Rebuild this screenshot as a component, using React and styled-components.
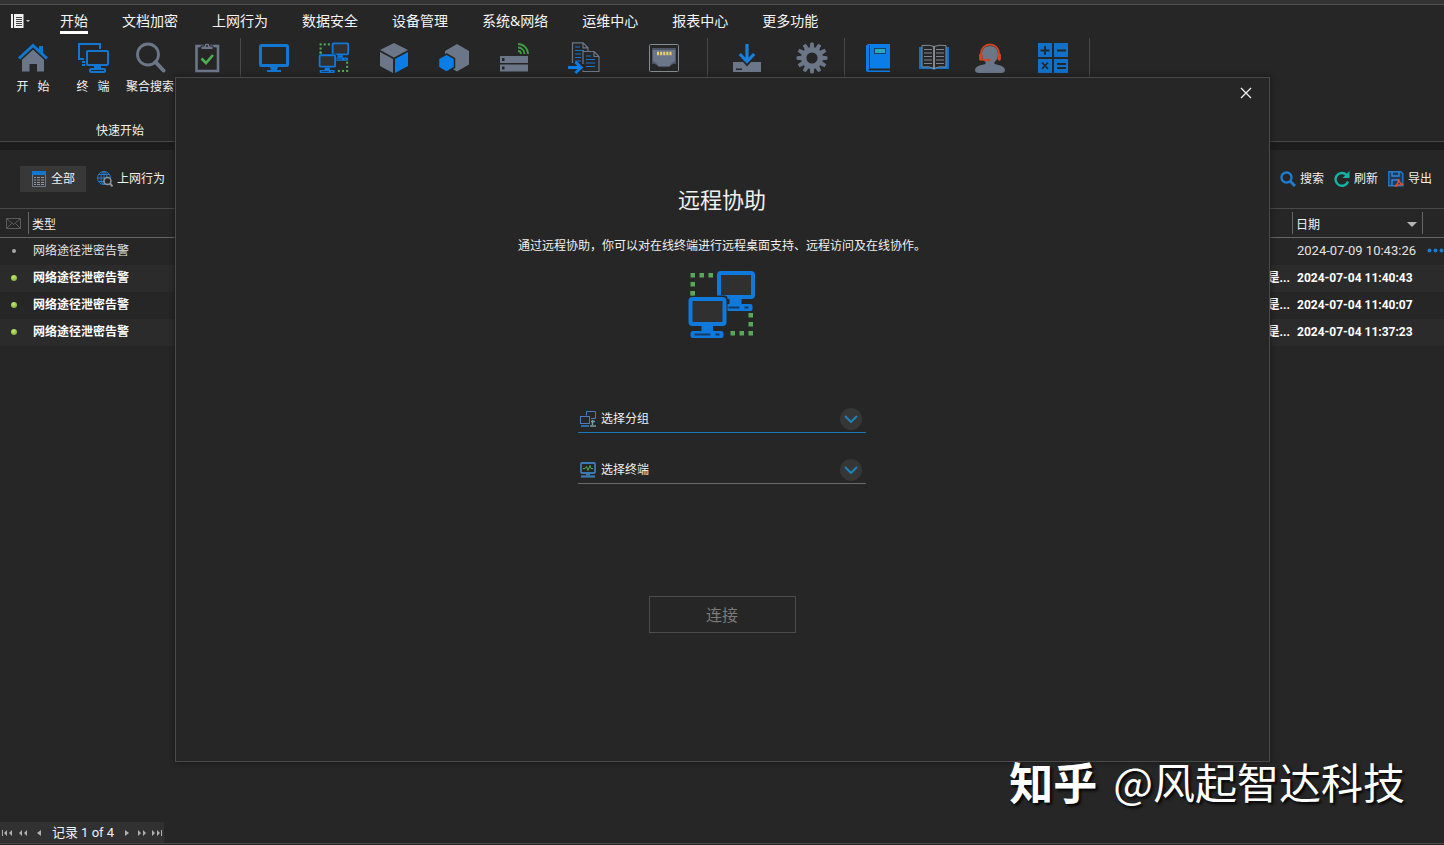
import React from "react";
import styled, { createGlobalStyle } from "styled-components";

const BLUE = "#1177d1";
const GRAY = "#6b7688";
const GREEN = "#4caf50";
const BG = "#262626";

const HomeIcon = () => (
  <Icon viewBox="0 0 32 32">
    <path d="M5 17.5L16 7.5l11 10V29.5h-7V22h-7.500v7.500H5z" fill={GRAY} />
    <path d="M2 17L16 4l14 13" fill="none" stroke={BG} strokeWidth="5" />
    <path d="M22 4h4v8l-4-4z" fill={BLUE} />
    <path d="M2 16.500L16 3.500l14 13" fill="none" stroke={BLUE} strokeWidth="3" />
  </Icon>
);

const TerminalIcon = () => (
  <Icon viewBox="0 0 32 32" fill="none" stroke={BLUE} strokeWidth="2">
    <path d="M7 17H2V2h21v5" />
    <path d="M8 20H5M8 23H5" />
    <rect x="10" y="9" width="21" height="14" rx="1" />
    <path d="M17 25h7" strokeWidth="3" />
    <rect x="13" y="27" width="15" height="3" rx="1" />
  </Icon>
);

const SearchIcon = () => (
  <Icon viewBox="0 0 32 32" fill="none" stroke={GRAY}>
    <circle cx="14" cy="12.500" r="10.500" strokeWidth="2.800" />
    <path d="M21.500 20l8 8.500" strokeWidth="4" strokeLinecap="round" />
  </Icon>
);

const TaskIcon = () => (
  <Icon viewBox="0 0 32 32" fill="none" stroke={GRAY}>
    <rect x="5.500" y="4" width="21.500" height="25" strokeWidth="2.600" />
    <path d="M10 7.500V4h3a3 3 0 0 1 6 0h3v3.500z" fill={GRAY} stroke={BG} />
    <circle cx="16" cy="4" r="1" fill={BG} stroke="none" />
    <path d="M10.500 16.500l4.500 4.500 7-8" stroke={GREEN} strokeWidth="2.600" />
  </Icon>
);

const MonitorIcon = () => (
  <Icon viewBox="0 0 32 32">
    <rect x="2.500" y="3.500" width="27" height="20" rx="1" fill="none" stroke={BLUE} strokeWidth="3" />
    <path d="M12 25h8l-1 3h4v2H9v-2h4z" fill={BLUE} />
  </Icon>
);

const dots = [
  [3, 3], [12, 3], [21, 3], [3, 12], [3, 21],
  [61, 43], [61, 52], [61, 61], [52, 61], [43, 61],
];

const RemoteArt = ({ size }) => (
  <Icon $size={size} viewBox="0 0 69 70">
    {dots.map(([x, y]) => (
      <rect key={`${x}-${y}`} x={x} y={y} width="4.500" height="4.500" fill="#57a85a" />
    ))}
    <rect x="31.500" y="3" width="34" height="24" rx="2" fill="#303030" stroke="#0f79dc" strokeWidth="4" />
    <path d="M42 29h12v5H42z" fill="#0f79dc" />
    <rect x="38" y="34" width="27" height="7" rx="2" fill="#0f79dc" />
    <path d="M41 37.500h11M57 37.500h4" stroke="#143c66" strokeWidth="2" />
    <path d="M0 25.500h37a3 3 0 0 1 3 3v29H0z" fill={BG} />
    <rect x="3" y="29" width="34" height="25" rx="2" fill="#303030" stroke="#0f79dc" strokeWidth="4" />
    <rect x="3" y="21" width="4.500" height="4.500" fill="#57a85a" />
    <path d="M14 56h11.500v6H14z" fill="#0f79dc" />
    <rect x="3" y="61" width="33" height="7" rx="2.500" fill="#0f79dc" />
    <path d="M7 64.500h16M28 64.500h4" stroke="#143c66" strokeWidth="2" />
  </Icon>
);

const CubeIcon = () => (
  <Icon viewBox="0 0 32 32">
    <path d="M16 1l14 7-14 7.500L2 8z" fill={GRAY} />
    <path d="M2 10l13 7v14L2 24z" fill={GRAY} />
    <path d="M17 17l13-7v14l-13 7z" fill="#0a7ee6" />
  </Icon>
);

const HexIcon = () => (
  <Icon viewBox="0 0 32 32">
    <path d="M19 2l12 7v13.500L19 29.500 7 22.500V9z" fill={GRAY} />
    <path d="M8.500 12l8 4.500v9l-8 4.700-8-4.700v-9z" fill="#0a7ee6" stroke={BG} strokeWidth="1.500" />
  </Icon>
);

const ServerIcon = () => (
  <Icon viewBox="0 0 32 32">
    <path d="M2 14h28v7H2zM2 22.500h28v7H2z" fill={GRAY} />
    <path d="M4 16h2.500v3H4zM4 24.500h2.500v3H4z" fill={BG} />
    <g fill="none" stroke="#3f9a43" strokeWidth="1.800">
      <path d="M20 9a3 3 0 0 1 3 3" />
      <path d="M20 5.500a6.500 6.500 0 0 1 6.500 6.500" />
      <path d="M20 2a10 10 0 0 1 10 10" />
    </g>
  </Icon>
);

const DocsIcon = () => (
  <Icon viewBox="0 0 32 32" fill="none" stroke={GRAY} strokeWidth="1.200">
    <path d="M4.500 21V.8h10.500l5 5V9M15 .8v5h5" />
    <path d="M7 5h5M7 8.500h9M7 12h6M7 15.500h6M7 19h6" stroke={BLUE} />
    <path d="M15 22V9.500h11l5 5v15H15v-1M26 9.500v5h5" />
    <path d="M18 14h5M18 17.500h9M18 21h9M18 24.500h9" stroke={BLUE} />
    <path d="M0 25.500h12M7.500 20l5.500 5.500L7.500 31" stroke="#0a7ee6" strokeWidth="3" />
  </Icon>
);

const PortIcon = () => (
  <Icon viewBox="0 0 32 32">
    <rect x="1.500" y="2.500" width="29" height="27" rx="1" fill="none" stroke="#858a93" />
    <path d="M5 6h22q1 0 1 1v14q0 1-1 1h-2l-4 3H11l-4-3H5q-1 0-1-1V7q0-1 1-1z" fill="#4d5767" />
    <path d="M5 8h22v11l-3 2-3 3H11l-3-3-3-2z" fill={GRAY} />
    <path d="M9 11.500h14.500" stroke="#ecd06a" strokeWidth="3.500" strokeDasharray="2.100 1" />
  </Icon>
);

const DownloadIcon = () => (
  <Icon viewBox="0 0 32 32">
    <path d="M2 20h28v10H2z" fill={GRAY} />
    <path d="M5 26.500h6v1.500H5z" fill={BG} />
    <path d="M16 2v18M8.500 11.500L16 20l7.500-8.500" fill="none" stroke={BG} strokeWidth="6" />
    <path d="M16 2v17M8.800 12L16 19.500l7.200-7.500" fill="none" stroke="#1680dd" strokeWidth="3.200" />
  </Icon>
);

const GearIcon = () => (
  <Icon viewBox="0 0 32 32">
    {[0, 30, 60, 90, 120, 150, 180, 210, 240, 270, 300, 330].map((a) => (
      <path key={a} d="M14.200 6l.6-5h2.400l.6 5z" fill={GRAY} stroke={GRAY} transform={`rotate(${a} 16 16)`} />
    ))}
    <circle cx="16" cy="16" r="8.200" fill="none" stroke={GRAY} strokeWidth="5.200" />
  </Icon>
);

const BookIcon = () => (
  <Icon viewBox="0 0 32 32">
    <path d="M4 3.500L6 2h22v24.500H7.500a1 1 0 0 0 0 2H28V30H6q-2 0-2-2z" fill="#0a7ee6" />
    <path d="M7.500 3v23" stroke={BG} strokeWidth="1" />
    <rect x="12.500" y="6.500" width="11" height="5" fill="#2aa7c4" stroke="#17405e" />
  </Icon>
);

const OpenBookIcon = () => (
  <Icon viewBox="0 0 32 32">
    <path d="M1 5h30v22H18l-2 1-2-1H1z" fill="#0f70c4" />
    <path d="M4 3.500q8-1 12 1 4-2 12-1V25q-8-1-12 1.500Q12 24 4 25z" fill={BG} stroke="#858b95" />
    <path d="M16 4.500v22" stroke="#c4c8cf" strokeWidth="1.200" />
    <path
      d="M6 7.500h8M6 11h8M6 14.500h8M6 18h8M6 21.500h8M18 7.500h8M18 11h8M18 14.500h8M18 18h8M18 21.500h8"
      stroke="#7e858f"
    />
  </Icon>
);

const HeadsetIcon = () => (
  <Icon viewBox="0 0 32 32">
    <path d="M16 4c5 0 8 3.500 8 8 0 4-1.500 6.500-3.500 8v2c6 1 10.500 3 10.500 6q0 3-4 3H5q-4 0-4-3c0-3 4.500-5 10.500-6v-2C9.500 18.500 8 16 8 12c0-4.500 3-8 8-8z" fill={GRAY} />
    <path d="M7 13v-1.500a9 9 0 0 1 18 0V13" fill="none" stroke="#d0451f" strokeWidth="1.800" />
    <path d="M6.800 13v4M25.200 13v4" stroke="#d0451f" strokeWidth="3.500" strokeLinecap="round" />
    <path d="M7 17q3 1.500 6 1" fill="none" stroke="#d0451f" strokeWidth="1.500" />
    <ellipse cx="14.500" cy="18" rx="2" ry="1.300" fill="#d0451f" />
  </Icon>
);

const CalcIcon = () => (
  <Icon viewBox="0 0 32 32">
    <path d="M1 1h14v14H1zM17 1h14v14H17zM1 17h14v14H1zM17 17h14v14H17z" fill="#1170c8" />
    <path
      d="M8 4v9M3.500 8.500h9M20 8.500h9M5 20.500l6 6.500M11 20.500L5 27M20 22h9M20 26h9"
      stroke={BG}
      strokeWidth="1.800"
    />
  </Icon>
);

const ListIcon = () => (
  <Icon $size={16} viewBox="0 0 16 16">
    <rect x="1.500" y=".5" width="13" height="15" fill="none" stroke="#6f7a88" />
    <path d="M1 0h14v4H1z" fill={BLUE} />
    <path d="M3 6.500h2M6 6.500h3M10 6.500h3M3 9h2M6 9h3M10 9h3M3 11.500h2M6 11.500h3M10 11.500h3M3 13.500h2M6 13.500h3M10 13.500h3" stroke="#9098a3" />
  </Icon>
);

const GlobeIcon = () => (
  <Icon $size={16} viewBox="0 0 16 16" fill="none" stroke="#2a7cc7">
    <circle cx="7" cy="7" r="6.500" />
    <ellipse cx="7" cy="7" rx="3" ry="6.500" />
    <path d="M.5 7h13M1.500 3.500h11M1.500 10.500h11M7 .5v13" />
    <circle cx="10.500" cy="10" r="3.500" fill={BG} stroke="#8d949e" strokeWidth="1.500" />
    <path d="M13 12.500l2.500 3" stroke="#8d949e" strokeWidth="2" />
  </Icon>
);

const FindIcon = () => (
  <Icon $size={16} viewBox="0 0 16 16" fill="none" stroke="#1c7cd0">
    <circle cx="6.500" cy="6.500" r="5" strokeWidth="2.400" />
    <path d="M10.500 10.500l4.500 4.500" strokeWidth="3" />
  </Icon>
);

const RefreshIcon = () => (
  <Icon $size={16} viewBox="0 0 16 16">
    <path d="M14 10.500A6.400 6.400 0 1 1 12.500 3.800" fill="none" stroke="#14b3a3" strokeWidth="2.400" />
    <path d="M15.500 0v7H8.500z" fill="#14b3a3" />
  </Icon>
);

const ExportIcon = () => (
  <Icon $size={16} viewBox="0 0 16 16">
    <path d="M.8.800h12l2 2v12h-14z" fill="#1d3a5c" stroke="#1c7cd0" strokeWidth="1.400" />
    <path d="M4 1v4h7V1M4 15V9h6" fill="none" stroke="#2b8be0" strokeWidth="1.400" />
    <path d="M7 15.500c3-3 4-5 3.500-7.500 1 4 2.500 5.500 5 5.500-3-.5-5.500.5-8.500 2z" fill="none" stroke="#e0502a" strokeWidth="1.400" />
  </Icon>
);

const GroupIcon = () => (
  <Icon $size={16} viewBox="0 0 16 16" fill="none" stroke="#4a7db8">
    <path d="M6.500 4.500v-4h9v7H11" />
    <rect x=".5" y="5.500" width="9" height="7" />
    <path d="M1 15h8" stroke="#2f86d8" strokeWidth="1.500" />
    <path d="M12.500 9v5M10 15h6M11 10.500h4" stroke="#6fa3a0" strokeWidth="1.400" />
  </Icon>
);

const HostIcon = () => (
  <Icon $size={16} viewBox="0 0 16 16" fill="none" stroke="#3d7ab5">
    <rect x="1" y="1" width="14" height="10" rx="1" strokeWidth="1.800" />
    <path d="M3 6.500h2l1.500-2 1.500 4 2-5 1 3h2" stroke={GREEN} />
    <path d="M6 12.500h4" strokeWidth="2" />
    <path d="M1 14.500h14" strokeWidth="2.200" />
  </Icon>
);

const MailIcon = () => (
  <Icon $size={16} viewBox="0 0 16 16" fill="none" stroke="#5c5c5c">
    <path d="M.5 3.500h14v10H.5zM.5 3.500l7 6 7-6M.5 13.500l5-5M14.500 13.500l-5-5" />
  </Icon>
);

const menus = ["开始", "文档加密", "上网行为", "数据安全", "设备管理", "系统&网络", "运维中心", "报表中心", "更多功能"];

const groups = [
  {
    title: "快速开始",
    items: [
      { icon: <HomeIcon />, label: "开   始", width: 60 },
      { icon: <TerminalIcon />, label: "终   端", width: 60 },
      { icon: <SearchIcon />, label: "聚合搜索", width: 54 },
      { icon: <TaskIcon />, name: "任务", width: 60 },
    ],
  },
  {
    items: [
      { icon: <MonitorIcon />, name: "桌面", width: 60 },
      { icon: <RemoteArt size={32} />, name: "远程协助", width: 60 },
      { icon: <CubeIcon />, name: "资产", width: 60 },
      { icon: <HexIcon />, name: "软件", width: 60 },
      { icon: <ServerIcon />, name: "服务器", width: 60 },
      { icon: <DocsIcon />, name: "文件分发", width: 80 },
      { icon: <PortIcon />, name: "端口", width: 80 },
    ],
  },
  {
    items: [
      { icon: <DownloadIcon />, name: "下载", width: 72 },
      { icon: <GearIcon />, name: "设置", width: 58 },
    ],
  },
  {
    items: [
      { icon: <BookIcon />, name: "手册", width: 60 },
      { icon: <OpenBookIcon />, name: "文档", width: 52 },
      { icon: <HeadsetIcon />, name: "客服", width: 60 },
      { icon: <CalcIcon />, name: "计算器", width: 66 },
    ],
  },
];

const rows = [
  { type: "网络途径泄密告警", date: "2024-07-09 10:43:26", read: true },
  { type: "网络途径泄密告警", date: "2024-07-04 11:40:43", note: "是..." },
  { type: "网络途径泄密告警", date: "2024-07-04 11:40:07", note: "是..." },
  { type: "网络途径泄密告警", date: "2024-07-04 11:37:23", note: "是..." },
];

const PageArrow = ({ name, d, width }) => (
  <PageButton aria-label={name} $width={width}>
    <svg width="12" height="8" viewBox="0 0 12 8" fill="#b0b0b0">
      <path d={d} />
    </svg>
  </PageButton>
);

function Select({ icon, label, active }) {
  return (
    <Field $active={active}>
      {icon}
      <Dropdown aria-label={label}>
        <option>{label}</option>
      </Dropdown>
      <Circle>
        <svg width="14" height="8" viewBox="0 0 14 8" fill="none" stroke="#1d82b8" strokeWidth="2">
          <path d="M1 1l6 6 6-6" />
        </svg>
      </Circle>
    </Field>
  );
}

function App() {
  return (
    <Page>
      <GlobalStyle />
      <TitleStrip />
      <Menu>
        <AppButton aria-label="菜单">
          <AppGlyph viewBox="0 0 20 14">
            <path d="M0 0h2v14H0zM3 0h9.500v14H3z" fill="#f0f0f0" />
            <path d="M5 3.500h6M5 5.500h6M5 7.500h6M5 9.500h6M5 11.500h6" stroke="#444" />
            <path d="M15 6h4l-2 2z" fill="#c8c8c8" />
          </AppGlyph>
        </AppButton>
        {menus.map((item, index) => (
          <MenuItem key={item} href="#" $active={index === 0}>
            {item}
          </MenuItem>
        ))}
      </Menu>
      <Ribbon>
        {groups.map((group, index) => (
          <Group key={index}>
            <GroupItems>
              {group.items.map((item, i) => (
                <Tool key={i} $width={item.width} aria-label={item.name}>
                  {item.icon}
                  {item.label}
                </Tool>
              ))}
            </GroupItems>
            <GroupTitle>{group.title}</GroupTitle>
          </Group>
        ))}
      </Ribbon>
      <Content>
        <Toolbar>
          <Filters>
            <Filter $active>
              <ListIcon />
              全部
            </Filter>
            <Filter>
              <GlobeIcon />
              上网行为
            </Filter>
          </Filters>
          <Actions>
            <Action>
              <FindIcon />
              搜索
            </Action>
            <Action>
              <RefreshIcon />
              刷新
            </Action>
            <Action>
              <ExportIcon />
              导出
            </Action>
          </Actions>
        </Toolbar>
        <Table>
          <colgroup>
            <col width="29" />
            <col />
            <col width="200" />
            <col width="130" />
            <col width="21" />
          </colgroup>
          <thead>
            <tr>
              <Th $icon>
                <MailIcon />
              </Th>
              <Th>类型</Th>
              <Th />
              <Th>
                <DateHead>
                  日期
                  <svg width="10" height="5" viewBox="0 0 10 5">
                    <path d="M0 0h10L5 5z" fill="#b5b5b5" />
                  </svg>
                </DateHead>
              </Th>
              <Th $last />
            </tr>
          </thead>
          <tbody>
            {rows.map((row) => (
              <Row key={row.date} $read={row.read}>
                <Td>
                  <Status $read={row.read} />
                </Td>
                <Td>{row.type}</Td>
                <Td $right>{row.note}</Td>
                <Td $large={row.read}>{row.date}</Td>
                <Td>
                  {row.read && (
                    <More aria-label="更多">
                      <svg width="17" height="5" viewBox="0 0 17 5" fill="#1c7cd0">
                        <circle cx="2.500" cy="2.500" r="2" />
                        <circle cx="8.500" cy="2.500" r="2" />
                        <circle cx="14.500" cy="2.500" r="2" />
                      </svg>
                    </More>
                  )}
                </Td>
              </Row>
            ))}
          </tbody>
        </Table>
      </Content>
      <Footer>
        <Pager>
          <PageArrow name="首页" width={14} d="M1 1h1v6H1zM6 1v6L3 4zM11 1v6L8 4z" />
          <PageArrow name="快退" width={18} d="M5 1v6L2 4zM10 1v6L7 4z" />
          <PageArrow name="上一页" width={14} d="M8 1v6L4 4z" />
          <PageInfo>记录 1 of 4</PageInfo>
          <PageArrow name="下一页" width={14} d="M4 1v6l4-3z" />
          <PageArrow name="快进" width={16} d="M2 1v6l3-3zM7 1v6l3-3z" />
          <PageArrow name="末页" width={14} d="M1 1v6l3-3zM6 1v6l3-3zM10 1h1v6h-1z" />
        </Pager>
      </Footer>
      <Overlay>
        <Modal role="dialog" aria-labelledby="remote-title">
          <Close aria-label="关闭">
            <svg width="12" height="12" viewBox="0 0 12 12" stroke="#f0f0f0" strokeWidth="1.300">
              <path d="M1 1l10 10M11 1L1 11" />
            </svg>
          </Close>
          <Title id="remote-title">远程协助</Title>
          <Description>
            通过远程协助，你可以对在线终端进行远程桌面支持、远程访问及在线协作。
          </Description>
          <RemoteArt size={70} />
          <Form>
            <Select icon={<GroupIcon />} label="选择分组" active />
            <Select icon={<HostIcon />} label="选择终端" />
          </Form>
          <Connect disabled>连接</Connect>
        </Modal>
      </Overlay>
      <Watermark>
        <Brand>知乎</Brand>
        @风起智达科技
      </Watermark>
    </Page>
  );
}

const GlobalStyle = createGlobalStyle`
  * {
    box-sizing: border-box;
  }

  body {
    margin: 0;
    background-color: ${BG};
  }

  button,
  select {
    font: inherit;
    color: inherit;
    background: none;
    border: none;
    padding: 0;
    margin: 0;
  }
`;

const Page = styled.div`
  position: relative;
  display: flex;
  flex-direction: column;
  min-height: 100vh;
  overflow: hidden;
  background-color: ${BG};
  color: #f0f0f0;
  font-family: Roboto, "Noto Sans CJK SC", sans-serif;
  font-size: 12px;
  line-height: 16px;
`;

const Icon = styled.svg`
  display: block;
  flex: none;
  width: ${(props) => props.$size || 32}px;
  height: ${(props) => props.$size || 32}px;
`;

const TitleStrip = styled.div`
  height: 5px;
  background-color: #333333;
  border-bottom: 1px solid #505050;
`;

const Menu = styled.nav`
  display: flex;
  align-items: center;
  gap: 34px;
  height: 32px;
  padding-left: 11px;
  font-family: "Noto Sans", "Noto Sans CJK SC", sans-serif;
  font-size: 14px;
`;

const AppButton = styled.button`
  display: flex;
  width: 15px;
`;

const AppGlyph = styled.svg`
  flex: none;
  width: 20px;
  height: 14px;
`;

const MenuItem = styled.a`
  height: 26px;
  line-height: 25px;
  color: #f5f5f5;
  text-decoration: none;
  white-space: nowrap;
  border-bottom: 3px solid ${(props) => (props.$active ? "#ffffff" : "transparent")};
`;

const Ribbon = styled.div`
  display: flex;
  padding-top: 1px;
  border-bottom: 1px solid #484848;
`;

const Group = styled.div`
  display: flex;
  flex-direction: column;
  justify-content: space-between;
  height: 103px;
  padding: 4px 3px 2px;
  border-right: 1px solid #484848;
`;

const GroupItems = styled.div`
  display: flex;
`;

const GroupTitle = styled.div`
  text-align: center;
`;

const Tool = styled.button`
  display: flex;
  flex-direction: column;
  align-items: center;
  gap: 5px;
  width: ${(props) => props.$width}px;
  white-space: pre;
`;

const Content = styled.main`
  flex: 1;
  border-top: 8px solid #1c1c1c;
`;

const Toolbar = styled.div`
  display: flex;
  align-items: center;
  justify-content: space-between;
  height: 58px;
  padding: 0 12px 0 20px;
`;

const Filters = styled.div`
  display: flex;
`;

const Filter = styled.button`
  display: flex;
  align-items: center;
  gap: 4px;
  height: 26px;
  padding: 0 11px;
  background-color: ${(props) => (props.$active ? "#383838" : "transparent")};
`;

const Actions = styled.div`
  display: flex;
  gap: 10px;
`;

const Action = styled.button`
  display: flex;
  align-items: center;
  gap: 4px;
`;

const Table = styled.table`
  width: 100%;
  table-layout: fixed;
  border-collapse: separate;
  border-spacing: 0;
`;

const Th = styled.th`
  height: 30px;
  padding: ${(props) => (props.$icon ? "0 0 0 6px" : "3px 6px 0 3px")};
  text-align: left;
  font-weight: 400;
  border-top: 1px solid #484848;
  border-bottom: 1px solid #666666;
  background: ${(props) =>
    props.$last
      ? "none"
      : "linear-gradient(#666666, #666666) right center / 1px 22px no-repeat"};
`;

const DateHead = styled.div`
  display: flex;
  align-items: center;
  justify-content: space-between;
`;

const Row = styled.tr`
  height: 27px;
  font-weight: ${(props) => (props.$read ? 400 : 700)};
  color: ${(props) => (props.$read ? "#e4e4e4" : "#ffffff")};

  &:nth-child(even) {
    background-color: #2b2b2b;
  }
`;

const Td = styled.td`
  padding: 0 3px 2px 4px;
  font-size: ${(props) => (props.$large ? 13 : 12)}px;
  text-align: ${(props) => (props.$right ? "right" : "left")};
  white-space: nowrap;
`;

const Status = styled.div`
  width: ${(props) => (props.$read ? 4 : 6)}px;
  height: ${(props) => (props.$read ? 4 : 6)}px;
  margin-left: ${(props) => (props.$read ? 8 : 7)}px;
  border-radius: 50%;
  background: ${(props) =>
    props.$read ? "#a8a8a8" : "radial-gradient(circle at 40% 30%, #c4e878, #6aa526)"};
`;

const More = styled.button`
  display: flex;
`;

const Footer = styled.footer`
  padding-bottom: 1px;
`;

const Pager = styled.div`
  display: flex;
  align-items: center;
  height: 22px;
  border-bottom: 1px solid #484848;
  background: linear-gradient(#313131, #313131) left / 164px 100% no-repeat;
`;

const PageButton = styled.button`
  display: flex;
  justify-content: center;
  width: ${(props) => props.$width}px;
`;

const PageInfo = styled.span`
  width: 74px;
  text-align: center;
  font-size: 13px;
`;

const Overlay = styled.div`
  position: absolute;
  inset: 0;
  display: flex;
  justify-content: center;
  align-items: flex-start;
  padding-top: 77px;
`;

const Modal = styled.section`
  display: flex;
  flex-direction: column;
  align-items: center;
  width: 90%;
  max-width: 1095px;
  padding-bottom: 128px;
  background-color: ${BG};
  border: 1px solid #4a4a4a;
  box-shadow: 0 0 5px #151515;
`;

const Close = styled.button`
  display: flex;
  align-items: center;
  justify-content: center;
  align-self: flex-end;
  width: 46px;
  height: 30px;
`;

const Title = styled.h1`
  margin: 78px 0 21px;
  font-size: 22px;
  line-height: 30px;
  font-weight: 400;
`;

const Description = styled.p`
  margin: 0 0 15px;
  line-height: 18px;
`;

const Form = styled.form`
  display: flex;
  flex-direction: column;
  gap: 21px;
  width: 288px;
  margin: 63px 0 112px;
`;

const Field = styled.label`
  display: flex;
  align-items: center;
  gap: 5px;
  height: 30px;
  padding: 2px 4px 0 2px;
  border-bottom: 1px solid ${(props) => (props.$active ? "#1a78b8" : "#6a6a6a")};
`;

const Dropdown = styled.select`
  flex: 1;
  appearance: none;
  outline: none;
  cursor: pointer;
`;

const Circle = styled.span`
  display: flex;
  align-items: center;
  justify-content: center;
  width: 22px;
  height: 22px;
  border-radius: 50%;
  background-color: #363636;
`;

const Connect = styled.button`
  width: 147px;
  height: 37px;
  padding-top: 2px;
  border: 1px solid #4c4c4c;
  font-size: 16px;
  color: #7a7a7a;
`;

const Watermark = styled.div`
  position: absolute;
  right: 39px;
  bottom: 34px;
  display: flex;
  align-items: center;
  gap: 16px;
  font-family: "Noto Sans CJK SC", sans-serif;
  font-size: 42px;
  line-height: 60px;
  color: #ffffff;
  text-shadow: 2px 2px 3px #000000;
`;

const Brand = styled.span`
  font-size: 44px;
  font-weight: 700;
`;

export default App;
